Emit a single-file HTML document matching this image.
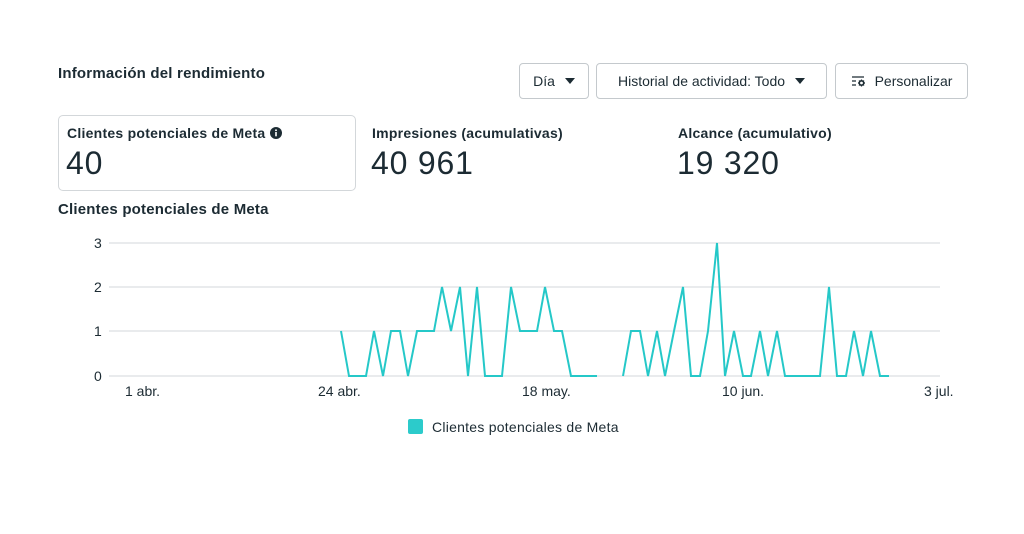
<!DOCTYPE html>
<html><head><meta charset="utf-8"><style>
*{margin:0;padding:0;box-sizing:border-box}
body{width:1024px;height:534px;background:#fff;font-family:"Liberation Sans",sans-serif;color:#1c2b33;position:relative;overflow:hidden}
.a{position:absolute;white-space:nowrap}
.b{font-weight:bold}
.btn{position:absolute;top:63px;height:36px;border:1px solid #c4c9cd;border-radius:4px;font-size:14px;display:flex;align-items:center;justify-content:center}
.tri{display:inline-block;width:0;height:0;border-left:5px solid transparent;border-right:5px solid transparent;border-top:6px solid #1c2b33;margin-left:10px}
.num{font-size:32px;font-weight:normal;letter-spacing:0.8px}
.lab{font-size:14px;letter-spacing:0.25px}
</style></head><body>
<div class="a b" style="left:58px;top:65px;font-size:15px;letter-spacing:0.2px">Información del rendimiento</div>
<div class="btn" style="left:519px;width:70px">Día<span class="tri"></span></div>
<div class="btn" style="left:596px;width:231px">Historial de actividad: Todo<span class="tri"></span></div>
<div class="btn" style="left:835px;width:133px"><svg width="16" height="14" viewBox="0 0 16 14" style="margin-right:8px"><path d="M1 3h12M1 7h4M1 11h4" stroke="#1c2b33" stroke-width="1.3"/><circle cx="10.5" cy="9" r="2.2" fill="none" stroke="#1c2b33" stroke-width="1.6"/><path d="M10.5 5.5v1.3M10.5 11.2v1.3M7 9h1.3M12.7 9H14M8 6.5l.9.9M12.1 10.6l.9.9M8 11.5l.9-.9M12.1 7.4l.9-.9" stroke="#1c2b33" stroke-width="1.2"/></svg>Personalizar</div>
<div class="a" style="left:58px;top:115px;width:298px;height:76px;border:1px solid #d3d7da;border-radius:5px"></div>
<div class="a b lab" style="left:67px;top:125px">Clientes potenciales de Meta <svg width="12" height="12" viewBox="0 0 12 12" style="vertical-align:-1px"><circle cx="6" cy="6" r="6" fill="#1c2b33"/><rect x="5.2" y="5" width="1.6" height="4.3" fill="#fff"/><circle cx="6" cy="3.2" r="0.95" fill="#fff"/></svg></div>
<div class="a num" style="left:66px;top:145px">40</div>
<div class="a b lab" style="left:372px;top:125px">Impresiones (acumulativas)</div>
<div class="a num" style="left:371px;top:145px">40 961</div>
<div class="a b lab" style="left:678px;top:125px">Alcance (acumulativo)</div>
<div class="a num" style="left:677px;top:145px">19 320</div>
<div class="a b" style="left:58px;top:201px;font-size:15px;letter-spacing:0.2px">Clientes potenciales de Meta</div>
<svg class="a" style="left:0;top:0" width="1024" height="534">
<g stroke="#dcdfe2" stroke-width="1.3"><line x1="109" y1="243" x2="940" y2="243"/><line x1="109" y1="287" x2="940" y2="287"/><line x1="109" y1="331" x2="940" y2="331"/><line x1="109" y1="376" x2="940" y2="376"/></g>
<g font-family="Liberation Sans" font-size="14" fill="#1c2b33"><text x="94" y="248">3</text><text x="94" y="292">2</text><text x="94" y="336">1</text><text x="94" y="381">0</text>
<text x="125" y="396">1 abr.</text><text x="318" y="396">24 abr.</text><text x="522" y="396">18 may.</text><text x="722" y="396">10 jun.</text><text x="924" y="396">3 jul.</text></g>
<g fill="none" stroke="#25c8c8" stroke-width="2" stroke-linejoin="miter">
<polyline points="341,331 349,376 358,376 366,376 374,331 383,376 391,331 400,331 408,376 417,331 425,331 434,331 442,287 451,331 460,287 468,376 477,287 485,376 494,376 502,376 511,287 520,331 528,331 537,331 545,287 554,331 562,331 571,376 579,376 588,376 597,376"/>
<polyline points="623,376 631,331 640,331 648,376 657,331 665,376 674,331 683,287 691,376 700,376 708,331 717,243 725,376 734,331 743,376 751,376 760,331 768,376 777,331 785,376 794,376 803,376 811,376 820,376 829,287 837,376 846,376 854,331 863,376 871,331 880,376 889,376"/>
</g>
<rect x="408" y="419" width="15" height="15" rx="2" fill="#2ccbcb"/>
<text x="432" y="432" font-family="Liberation Sans" font-size="14" letter-spacing="0.25" fill="#1c2b33">Clientes potenciales de Meta</text>
</svg>
</body></html>
